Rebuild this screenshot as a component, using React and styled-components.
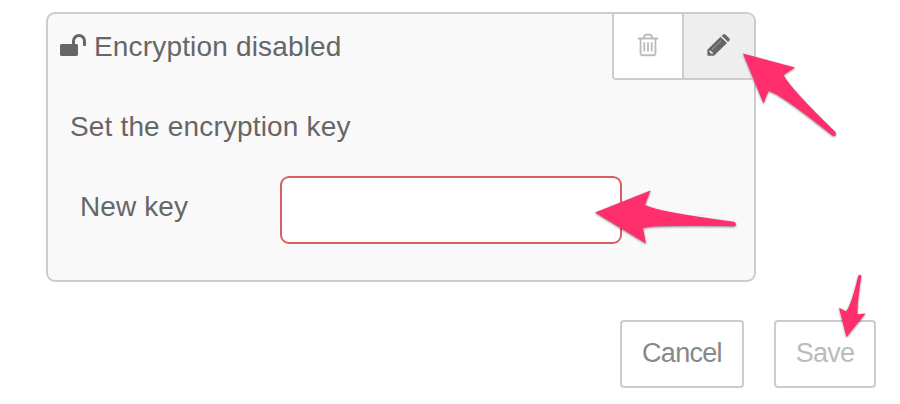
import React from "react";
import styled, { createGlobalStyle } from "styled-components";

const GlobalStyle = createGlobalStyle`
  *, *::before, *::after { box-sizing: border-box; }
  body {
    margin: 0;
    background: #fff;
    color: #666;
    font: 28px/40px "Liberation Sans", Arial, sans-serif;
    overflow: hidden;
  }
`;

const Page = styled.main`
  position: relative;
  width: 900px;
  height: 404px;
  padding: 12px 24px 0 46px;
`;

const Panel = styled.section`
  width: 710px;
  height: 270px;
  border: 2px solid #ccc;
  border-radius: 9px;
  background: #f9f9f9;
  overflow: hidden;
`;

const PanelHeader = styled.header`
  display: flex;
  justify-content: space-between;
  height: 66px;
`;

const Title = styled.h1`
  display: flex;
  align-items: flex-start;
  gap: 7px;
  margin: 0;
  padding: 13px 0 0 11px;
  font-size: 28px;
  font-weight: 400;
  letter-spacing: 0.17px;
  svg { margin-top: 5px; }
`;

const Toolbar = styled.div`
  display: flex;
  height: 66px;
  border: solid #ccc;
  border-width: 0 0 2px 2px;
  border-radius: 0 0 4px 4px;
  overflow: hidden;
`;

const ToolButton = styled.button`
  display: flex;
  justify-content: center;
  align-items: flex-start;
  width: ${(p) => (p.$active ? 72 : 68)}px;
  height: 64px;
  padding: ${(p) => (p.$active ? "19px" : "17.7px")} 0 0;
  border: 0;
  border-left: ${(p) => (p.$active ? "2px solid #ccc" : "0")};
  background: ${(p) => (p.$active ? "#eee" : "#fff")};
  color: ${(p) => (p.$active ? "#666" : "#bbb")};
`;

const Glyph = styled.svg`
  display: block;
  flex: none;
  width: ${(p) => p.$size}px;
  height: ${(p) => p.$size}px;
  fill: currentColor;
`;

const Intro = styled.p`
  margin: 27px 0 0 22px;
  letter-spacing: 0.16px;
`;

const Field = styled.label`
  display: flex;
  align-items: center;
  margin: 29px 0 0 32px;
`;

const FieldName = styled.span`
  width: 200px;
  padding-bottom: 6px;
  letter-spacing: 0.1px;
`;

const KeyInput = styled.input`
  width: 342px;
  height: 68px;
  padding: 12px;
  border: 2px solid #d9605f;
  border-radius: 9px;
  outline: 0;
  background: #fff;
  color: inherit;
  font: inherit;
`;

const Actions = styled.footer`
  display: flex;
  justify-content: flex-end;
  gap: 30px;
  margin-top: 38px;
`;

const ActionButton = styled.button`
  width: ${(p) => p.$width}px;
  height: 68px;
  padding: 0 0 3px;
  border: 2px solid #ccc;
  border-radius: 4px;
  background: #fff;
  color: ${(p) => p.$color};
  font: 27px/40px "Liberation Sans", Arial, sans-serif;
  letter-spacing: -0.7px;
`;

const Arrows = styled.svg`
  position: absolute;
  top: 0;
  left: 0;
  fill: #ff2f6d;
  pointer-events: none;
  filter: drop-shadow(0 1.5px 1.2px rgba(0, 0, 0, 0.45));
`;

const icons = {
  unlock:
    "M1728 576v256q0 26-19 45t-45 19h-64q-26 0-45-19t-19-45v-256q0-106-75-181t-181-75-181 75-75 181v192h96q40 0 68 28t28 68v576q0 40-28 68t-68 28h-960q-40 0-68-28t-28-68v-576q0-40 28-68t68-28h672v-192q0-185 131.5-316.5t316.5-131.5 316.5 131.5 131.5 316.5z",
  trash:
    "M704 736v576q0 14-9 23t-23 9h-64q-14 0-23-9t-9-23v-576q0-14 9-23t23-9h64q14 0 23 9t9 23zm256 0v576q0 14-9 23t-23 9h-64q-14 0-23-9t-9-23v-576q0-14 9-23t23-9h64q14 0 23 9t9 23zm256 0v576q0 14-9 23t-23 9h-64q-14 0-23-9t-9-23v-576q0-14 9-23t23-9h64q14 0 23 9t9 23zm128 724v-948h-896v948q0 22 7 40.5t14.5 27 10.5 8.5h832q3 0 10.5-8.5t14.5-27 7-40.5zm-672-1076h448l-48-117q-7-9-17-11h-317q-10 2-17 11zm928 32v64q0 14-9 23t-23 9h-96v948q0 83-47 143.5t-113 60.5h-832q-66 0-113-58.5t-47-141.5v-952h-96q-14 0-23-9t-9-23v-64q0-14 9-23t23-9h309l70-167q15-37 54-63t79-26h320q40 0 79 26t54 63l70 167h309q14 0 23 9t9 23z",
};

const Icon = ({ name, size }) => (
  <Glyph $size={size} viewBox="0 0 1792 1792" aria-hidden="true">
    <path d={icons[name]} />
  </Glyph>
);

const PencilIcon = () => (
  <Glyph $size={24} viewBox="0 0 24 24" aria-hidden="true">
    <path d="M13.5 3.8L20 10.1L7 22.8H.4V16.7Z" />
    <path d="M14.6 2.7L16.1 1.4Q17.2.5 18.4 1.5L22.2 5.2Q23.3 6.4 22.4 7.5L21.1 9Z" />
    <path d="M2.7 17.4L4.2 17.7L4.6 19.2L6.1 19.6L6 20.5L4.6 21L2.2 18.7Z" fill="#eee" />
    <path d="M4.9 16.7L14.1 7.6" stroke="#bbb" strokeWidth=".8" />
  </Glyph>
);

export default function App() {
  return (
    <>
      <GlobalStyle />
      <Page>
        <Panel>
          <PanelHeader>
            <Title>
              <Icon name="unlock" size={28} />
              Encryption disabled
            </Title>
            <Toolbar>
              <ToolButton aria-label="Delete">
                <Icon name="trash" size={26} />
              </ToolButton>
              <ToolButton $active aria-label="Edit">
                <PencilIcon />
              </ToolButton>
            </Toolbar>
          </PanelHeader>
          <Intro>Set the encryption key</Intro>
          <Field>
            <FieldName>New key</FieldName>
            <KeyInput type="text" />
          </Field>
        </Panel>
        <Actions>
          <ActionButton $width={124} $color="#888">Cancel</ActionButton>
          <ActionButton $width={102} $color="#bbb">Save</ActionButton>
        </Actions>
        <Arrows width="900" height="404" viewBox="0 0 900 404" aria-hidden="true">
          <path d="M743 53.5L795 67.5L783.5 75Q791 89 835.5 132Q837 136 833 136Q779 93 768.5 91L763.5 103.5Z" />
          <path d="M595 212.5L650.5 190.5L645 205Q659 212 734 221.7Q738 224 734.5 226.2Q654 225 643 228L646 243.5Z" />
          <path d="M846.5 337L839 307.7L846 311.3Q851 306 858.2 276Q860 273.5 861.3 276Q857 305 857.5 314.2L865.5 313.5Z" />
        </Arrows>
      </Page>
    </>
  );
}
